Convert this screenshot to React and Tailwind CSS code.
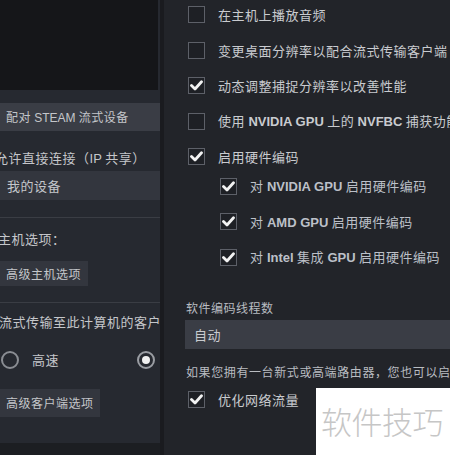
import React from "react";

const font = { fontFamily: '"Noto Sans CJK SC", "Noto Sans", sans-serif' };

function T({ children, bold = true }) {
  const parts = String(children).split(/([A-Za-z][A-Za-z ]*[A-Za-z]|[A-Za-z])/);
  return (
    <span>
      {parts.map((p, i) =>
        /^[A-Za-z]/.test(p) ? (
          <span key={i} className={`tracking-normal ${bold ? "font-bold" : ""}`} style={{ fontFamily: '"Liberation Sans", Arial, sans-serif' }}>
            {p}
          </span>
        ) : (
          <span key={i}>{p}</span>
        )
      )}
    </span>
  );
}

function Check({ checked }) {
  return (
    <div className="w-[17px] h-[17px] border border-[#5d6068] bg-[#1e2025] flex items-center justify-center shrink-0">
      {checked && (
        <svg width="13" height="11" viewBox="0 0 13 11">
          <path d="M1.5 5.5 L5 9 L11.5 1.8" fill="none" stroke="#f2f2f2" strokeWidth="2.8" strokeLinecap="round" strokeLinejoin="round" />
        </svg>
      )}
    </div>
  );
}

function Row({ checked, children, sub, className = "" }) {
  return (
    <div className={`flex items-center h-[35.5px] ${sub ? "pl-[56px]" : "pl-[24px]"} ${className}`}>
      <Check checked={checked} />
      <span className={`ml-[13px] whitespace-nowrap text-[13px] tracking-[0.5px] ${sub ? "text-[#bcc0c8]" : "text-[#c9cbcf]"}`}>
        <T>{children}</T>
      </span>
    </div>
  );
}

export default function App() {
  return (
    <div className="relative w-[450px] h-[455px] overflow-hidden flex bg-[#222429]" style={font}>
      {/* Left panel */}
      <div className="w-[160px] shrink-0 h-full flex flex-col bg-[#1c1e22]">
        <div className="h-[443px] bg-[#262930] flex flex-col text-[13px] tracking-[0.5px] text-[#c4c6ca] whitespace-nowrap">
          <div className="h-[90px] bg-[#151619] mr-[2px]" />
          <div className="mt-[13px] h-[28px] bg-[#3a3d45] flex items-center pl-[6px] text-[12px]">
            <T bold={false}>配对 STEAM 流式设备</T>
          </div>
          <div className="mt-[17px] h-[20px] flex items-center -ml-[5px]">
            <T bold={false}>允许直接连接（IP 共享）</T>
          </div>
          <div className="mt-[3px] h-[29px] bg-[#33363e] flex items-center pl-[7px]">我的设备</div>
          <div className="mt-[17px] h-px bg-[#3a3d44]" />
          <div className="mt-[11px] h-[20px] flex items-center -ml-[2px]">主机选项：</div>
          <div className="mt-[12px] h-[25px] w-[88px] bg-[#33363e] flex items-center pl-[6px] text-[12px]">高级主机选项</div>
          <div className="mt-[16px] h-px bg-[#3a3d44]" />
          <div className="mt-[9px] h-[20px] flex items-center -ml-[1px]">流式传输至此计算机的客户</div>
          <div className="mt-[16px] h-[24px] flex items-center">
            <div className="w-[18px] h-[18px] rounded-full border-2 border-[#8a8d93] ml-[1px] shrink-0" />
            <span className="ml-[13px]">高速</span>
            <div className="ml-auto mr-[5px] w-[18px] h-[18px] rounded-full border-2 border-[#9a9da3] flex items-center justify-center">
              <div className="w-[8px] h-[8px] rounded-full bg-[#f0f0f0]" />
            </div>
          </div>
          <div className="mt-[17px] h-[28px] w-[100px] bg-[#33363e] flex items-center pl-[6px] text-[12px]">高级客户端选项</div>
        </div>
      </div>
      {/* Divider */}
      <div className="w-[4px] shrink-0 bg-[#1a1b1f]" />
      {/* Right panel */}
      <div className="flex-1 min-w-0 flex flex-col">
        <div className="-mt-[3px]">
          <Row checked={false}>在主机上播放音频</Row>
          <Row checked={false}>变更桌面分辨率以配合流式传输客户端</Row>
          <Row checked={true}>动态调整捕捉分辨率以改善性能</Row>
          <Row checked={false}>使用 NVIDIA GPU 上的 NVFBC 捕获功能</Row>
          <Row checked={true}>启用硬件编码</Row>
          <div className="-mt-[6px]">
            <Row checked={true} sub>对 NVIDIA GPU 启用硬件编码</Row>
            <Row checked={true} sub>对 AMD GPU 启用硬件编码</Row>
            <Row checked={true} sub>对 Intel 集成 GPU 启用硬件编码</Row>
          </div>
        </div>
        <div className="mt-[24px] pl-[22px] text-[12px] tracking-[0.5px] text-[#b9bcc1] whitespace-nowrap">软件编码线程数</div>
        <div className="mt-[3px] ml-[21px] h-[29px] bg-[#3a3d45] flex items-center pl-[9px] text-[13px] tracking-[0.5px] text-[#c9cbcf]">自动</div>
        <div className="mt-[14px] pl-[22px] text-[12px] tracking-[0.6px] text-[#b9bcc1] whitespace-nowrap">如果您拥有一台新式或高端路由器，您也可以启用此选项</div>
        <Row checked={true} className="mt-[1px]">优化网络流量</Row>
      </div>
      {/* Watermark */}
      <div className="absolute left-[316px] top-[388px] right-0 bottom-0 bg-white flex items-center pl-[5px]">
        <span className="text-[31px] font-light tracking-[-0.5px] text-[#c6c6c6] whitespace-nowrap">软件技巧</span>
      </div>
    </div>
  );
}
